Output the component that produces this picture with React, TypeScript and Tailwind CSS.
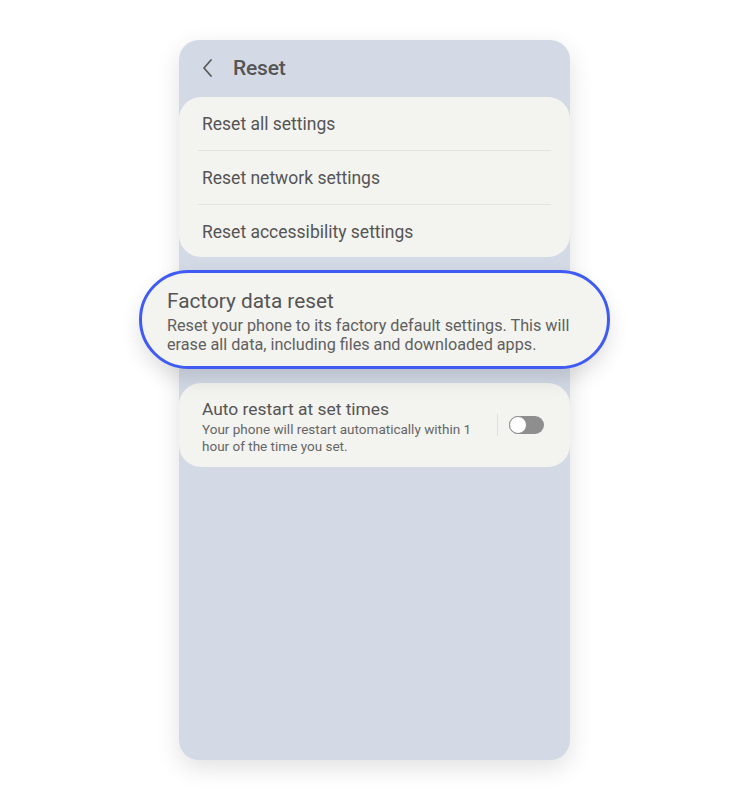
import React from 'react';

export default function App() {
  return (
    <div className="w-[750px] h-[800px] bg-white pt-[40px] pl-[179px]" style={{ fontFamily: 'Roboto, "Noto Sans", sans-serif' }}>
      <div className="relative w-[391px] h-[720px] rounded-[20px] bg-[#d3dae6] shadow-[0_8px_24px_rgba(0,0,0,0.12)]">
        {/* Header */}
        <div className="flex items-center h-[57px] pl-[22px]">
          <svg width="14" height="20" viewBox="0 0 14 20" fill="none" className="mt-[-2px]">
            <path d="M10 2 L3 10 L10 18" stroke="#5a5a5a" strokeWidth="1.8" strokeLinecap="round" strokeLinejoin="round" />
          </svg>
          <span className="ml-[18px] text-[21px] font-medium text-[#555555] tracking-[-0.2px]">Reset</span>
        </div>

        {/* Reset options */}
        <div className="bg-[#f3f3ef] rounded-[22px] px-[19px]">
          <div className="h-[54px] flex items-center pl-[4px] pt-[2px] border-b border-[#e3e3dc] text-[17.5px] text-[#555555]">Reset all settings</div>
          <div className="h-[54px] flex items-center pl-[4px] pt-[2px] border-b border-[#e3e3dc] text-[17.5px] text-[#555555]">Reset network settings</div>
          <div className="h-[52px] flex items-center pl-[4px] pt-[2px] text-[17.5px] text-[#555555]">Reset accessibility settings</div>
        </div>

        {/* Factory data reset, highlighted */}
        <div className="relative z-10 mx-[-40px] mt-[13px] h-[99px] rounded-full border-[3px] border-[#3f5bf3] bg-[#f3f3ef] shadow-[0_10px_20px_rgba(0,0,0,0.12)] pl-[25px] pt-[4px] flex flex-col justify-center">
          <div className="text-[20.8px] leading-[25px] text-[#555555]">Factory data reset</div>
          <div className="text-[16.2px] leading-[19px] text-[#606060] mt-[2px]">
            Reset your phone to its factory default settings. This will
            <br />
            erase all data, including files and downloaded apps.
          </div>
        </div>

        {/* Auto restart */}
        <div className="mt-[14px] h-[84px] bg-[#f3f3ef] rounded-[22px] pl-[23px] pr-[26px] flex items-center">
          <div className="flex-1 pt-[4px]">
            <div className="text-[17.4px] leading-[21px] text-[#555555]">Auto restart at set times</div>
            <div className="text-[13.5px] leading-[17px] text-[#666666] mt-[1px]">
              Your phone will restart automatically within 1
              <br />
              hour of the time you set.
            </div>
          </div>
          <div className="w-px h-[22px] bg-[#e0e0da] mr-[11px]" />
          <div className="relative w-[35px] h-[18px] rounded-full bg-[#8e8e8e]">
            <div className="absolute left-0 top-0 w-[18px] h-[18px] rounded-full bg-white border-[1.5px] border-[#8e8e8e]" />
          </div>
        </div>
      </div>
    </div>
  );
}
